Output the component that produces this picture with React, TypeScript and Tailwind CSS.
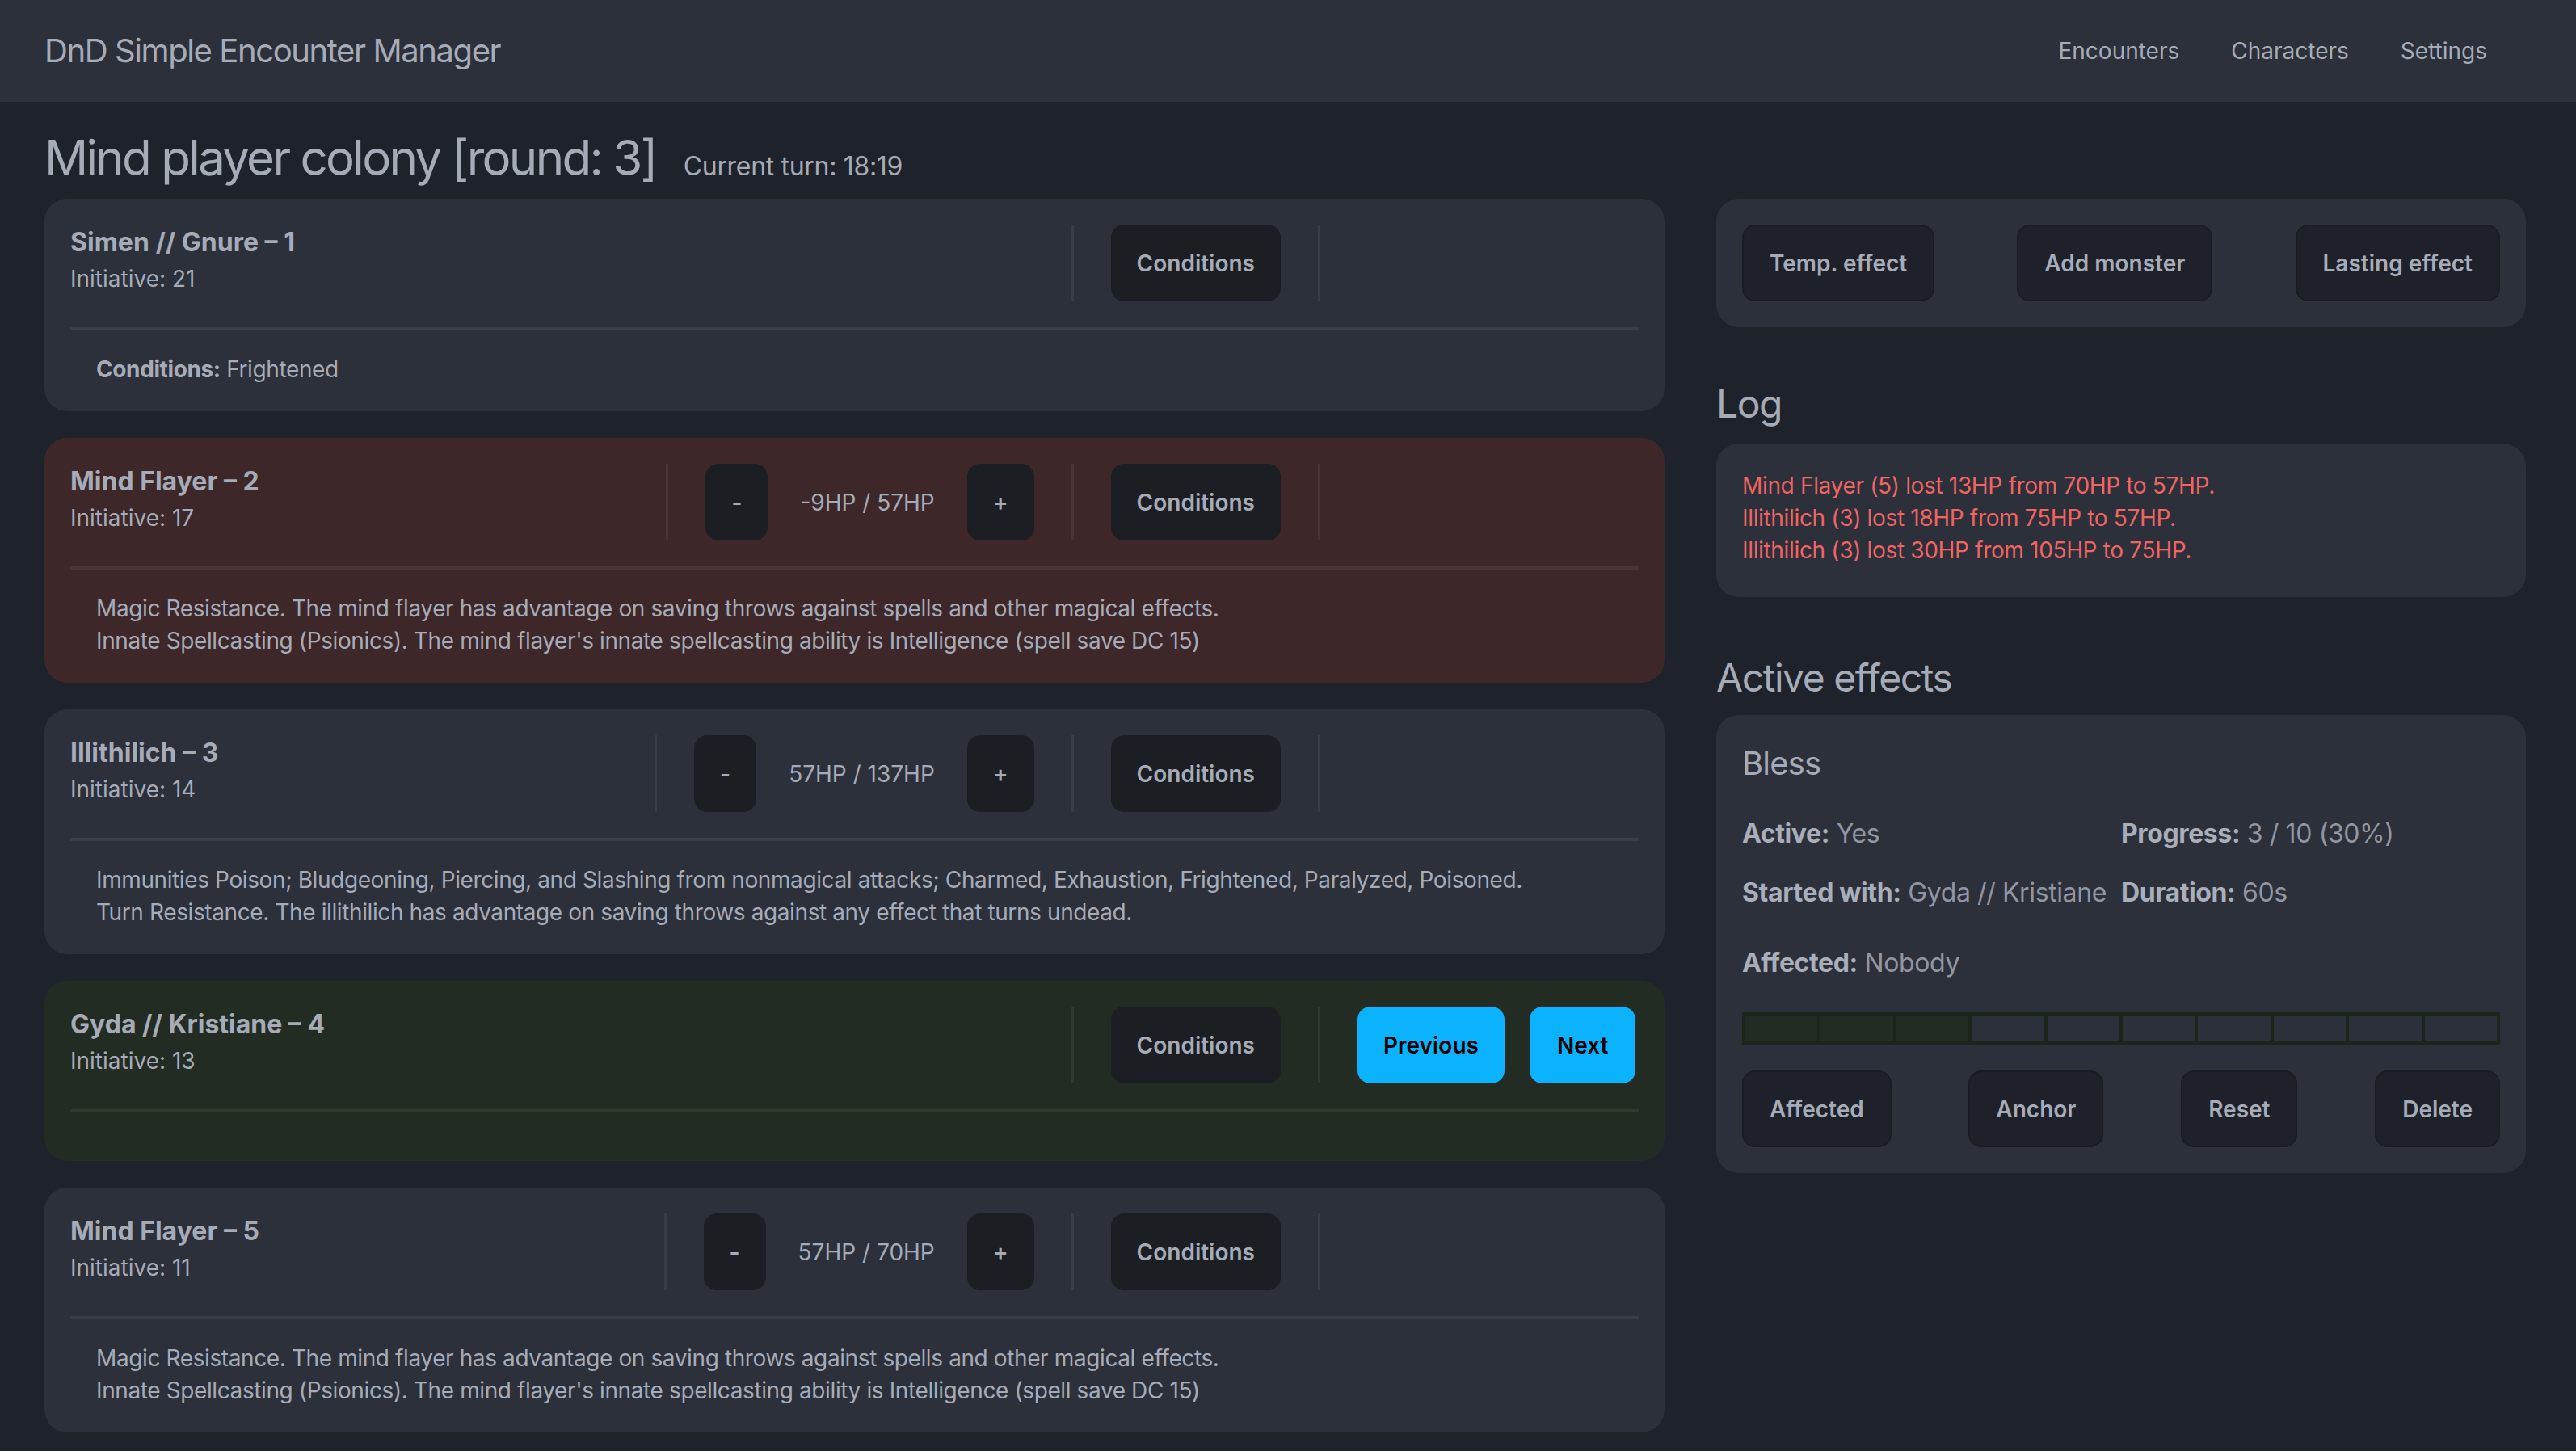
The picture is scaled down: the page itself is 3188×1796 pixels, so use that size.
import React from 'react'

type Tone = 'normal' | 'red' | 'green'

interface Combatant {
  name: string
  initiative: number
  tone: Tone
  hp?: string
  description?: string[]
  conditions?: string
  current?: boolean
}

const combatants: Combatant[] = [
  { name: 'Simen // Gnure – 1', initiative: 21, tone: 'normal', conditions: 'Frightened' },
  {
    name: 'Mind Flayer – 2',
    initiative: 17,
    tone: 'red',
    hp: '-9HP / 57HP',
    description: [
      'Magic Resistance. The mind flayer has advantage on saving throws against spells and other magical effects.',
      "Innate Spellcasting (Psionics). The mind flayer's innate spellcasting ability is Intelligence (spell save DC 15)",
    ],
  },
  {
    name: 'Illithilich – 3',
    initiative: 14,
    tone: 'normal',
    hp: '57HP / 137HP',
    description: [
      'Immunities Poison; Bludgeoning, Piercing, and Slashing from nonmagical attacks; Charmed, Exhaustion, Frightened, Paralyzed, Poisoned.',
      'Turn Resistance. The illithilich has advantage on saving throws against any effect that turns undead.',
    ],
  },
  { name: 'Gyda // Kristiane – 4', initiative: 13, tone: 'green', current: true },
  {
    name: 'Mind Flayer – 5',
    initiative: 11,
    tone: 'normal',
    hp: '57HP / 70HP',
    description: [
      'Magic Resistance. The mind flayer has advantage on saving throws against spells and other magical effects.',
      "Innate Spellcasting (Psionics). The mind flayer's innate spellcasting ability is Intelligence (spell save DC 15)",
    ],
  },
]

const toneStyles: Record<Tone, { card: string; line: string }> = {
  normal: { card: 'bg-[#2b303a]', line: 'bg-[#383d48]' },
  red: { card: 'bg-[#3d2728]', line: 'bg-[#4b3336]' },
  green: { card: 'bg-[#232c22]', line: 'bg-[#2f3a2d]' },
}

const darkBtn =
  'h-full rounded-[16px] bg-[#1b1e23] px-[32px] text-[28px] font-semibold text-[#a6abb8]'

const panelBtn =
  'h-[95px] rounded-[16px] border-2 border-[#191c21] bg-[#1e2129] px-[32px] text-[28px] font-semibold text-[#a6abb8]'

const CombatantCard = ({ c }: { c: Combatant }) => {
  const tone = toneStyles[c.tone]
  const sep = <div className={`w-[3px] self-stretch ${tone.line}`} />

  return (
    <div className={`rounded-[28px] p-[32px] ${tone.card}`}>
      <div className="flex h-[95px] items-stretch">
        <div className="flex flex-1 flex-col">
          <div className="text-[32px] font-bold leading-[44px] text-[#a6abb8]">{c.name}</div>
          <div className="mt-[3px] text-[28px] leading-[40px] text-[#a6abb8]">
            Initiative: {c.initiative}
          </div>
        </div>
        {c.hp && (
          <>
            {sep}
            <div className="flex items-stretch gap-[40px] px-[46px]">
              <button className={darkBtn}>-</button>
              <span className="self-center text-[28px] text-[#a6abb8]">{c.hp}</span>
              <button className={darkBtn}>+</button>
            </div>
          </>
        )}
        {sep}
        <div className="flex items-stretch px-[46px]">
          <button className={darkBtn}>Conditions</button>
        </div>
        {sep}
        <div className="flex w-[394px] items-stretch gap-[31px] pl-[46px]">
          {c.current && (
            <>
              <button className="h-full rounded-[16px] bg-[#0bb3fe] px-[32px] text-[28px] font-semibold text-black">
                Previous
              </button>
              <button className="h-full rounded-[16px] bg-[#0bb3fe] px-[34px] text-[28px] font-semibold text-black">
                Next
              </button>
            </>
          )}
        </div>
      </div>
      <div className={`mt-[32px] h-[4px] ${tone.line}`} />
      <div className="px-[32px] pt-[28px] text-[28px] leading-[40px] tracking-[-0.014em] text-[#a6abb8]">
        {c.conditions && (
          <div>
            <span className="font-bold">Conditions:</span> {c.conditions}
          </div>
        )}
        {c.description?.map((d, i) => <div key={i}>{d}</div>)}
      </div>
    </div>
  )
}

const Field = ({ label, value }: { label: string; value: string }) => (
  <div className="text-[32px] leading-[44px] tracking-[-0.012em]">
    <span className="font-bold text-[#a9aebb]">{label}:</span>{' '}
    <span className="text-[#9296a2]">{value}</span>
  </div>
)

const App = () => {
  const progress = 3
  return (
    <div className="min-h-screen bg-[#1e222a] font-['Inter',sans-serif] text-[#a6abb8]">
      <header className="flex h-[126px] items-center justify-between bg-[#2b303a] pl-[55px] pr-[110px]">
        <div className="text-[40px] tracking-[-0.035em]">DnD Simple Encounter Manager</div>
        <nav className="flex gap-[64px] text-[28px]">
          <a>Encounters</a>
          <a>Characters</a>
          <a>Settings</a>
        </nav>
      </header>

      <main className="pl-[55px] pr-[62px] pb-[25px]">
        <div className="mb-[15px] mt-[33px] flex items-baseline gap-[34px]">
          <h1 className="text-[60px] leading-[72px] tracking-[-0.045em]">Mind player colony [round: 3]</h1>
          <span className="text-[32px] tracking-[-0.01em]">Current turn: 18:19</span>
        </div>

        <div className="flex items-start gap-[64px]">
          <div className="flex flex-1 flex-col gap-[33px]">
            {combatants.map((c, i) => (
              <CombatantCard key={i} c={c} />
            ))}
          </div>

          <aside className="w-[1002px]">
            <div className="flex justify-between rounded-[28px] bg-[#2b303a] p-[32px]">
              <button className={panelBtn}>Temp. effect</button>
              <button className={panelBtn}>Add monster</button>
              <button className={panelBtn}>Lasting effect</button>
            </div>

            <h2 className="mb-[20px] mt-[66px] text-[48px] leading-[58px] tracking-[-0.03em]">Log</h2>
            <div className="rounded-[28px] bg-[#2b303a] p-[32px] pb-[38px] text-[28px] leading-[40px] tracking-[-0.012em] text-[#f16462]">
              <div>Mind Flayer (5) lost 13HP from 70HP to 57HP.</div>
              <div>Illithilich (3) lost 18HP from 75HP to 57HP.</div>
              <div>Illithilich (3) lost 30HP from 105HP to 75HP.</div>
            </div>

            <h2 className="mb-[17px] mt-[71px] text-[48px] leading-[58px] tracking-[-0.03em]">
              Active effects
            </h2>
            <div className="rounded-[28px] bg-[#2b303a] p-[32px]">
              <div className="text-[40px] leading-[56px] tracking-[-0.02em]">Bless</div>
              <div className="mt-[37px] grid grid-cols-2 gap-y-[29px]">
                <Field label="Active" value="Yes" />
                <Field label="Progress" value="3 / 10 (30%)" />
                <Field label="Started with" value="Gyda // Kristiane" />
                <Field label="Duration" value="60s" />
              </div>
              <div className="mt-[43px]">
                <Field label="Affected" value="Nobody" />
              </div>
              <div className="mt-[39px] flex h-[40px] border-4 border-[#1b2519]">
                {Array.from({ length: 10 }).map((_, i) => (
                  <div
                    key={i}
                    className={`flex-1 ${i > 0 ? 'border-l-4 border-[#1b2519]' : ''} ${
                      i < progress ? 'bg-[#232c22]' : ''
                    }`}
                  />
                ))}
              </div>
              <div className="mt-[32px] flex justify-between">
                <button className={panelBtn}>Affected</button>
                <button className={panelBtn}>Anchor</button>
                <button className={panelBtn}>Reset</button>
                <button className={panelBtn}>Delete</button>
              </div>
            </div>
          </aside>
        </div>
      </main>
    </div>
  )
}

export default App
